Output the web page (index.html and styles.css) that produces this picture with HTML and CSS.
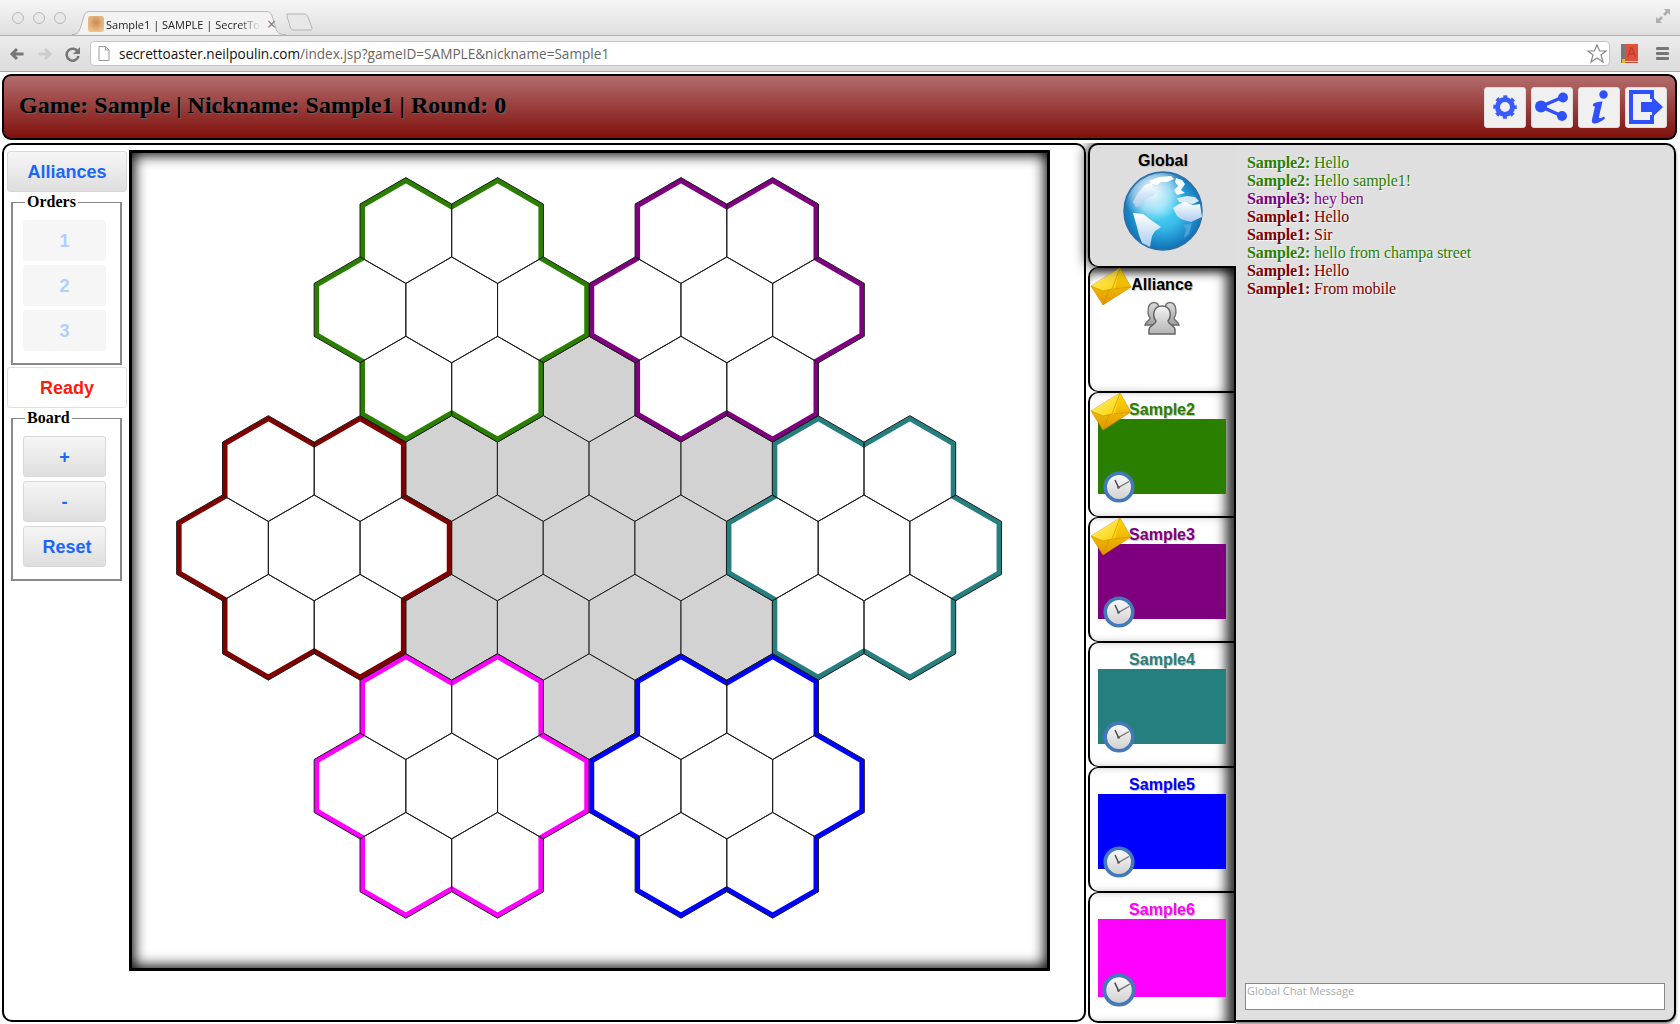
FILE: index.html
```html
<!DOCTYPE html>
<html>
    <head>
        <meta charset="utf-8">
        <title>Sample1 | SAMPLE | SecretToaster</title>
        <link rel="stylesheet" href="styles.css">
    </head>
    <body>
        <svg class="defs" width="0" height="0">
            <defs>
                <!-- globe -->
                <radialGradient id="globe-sea" cx="50%" cy="48%" r="58%">
                    <stop offset="0" stop-color="#52d4f6"/>
                    <stop offset=".4" stop-color="#38bcea"/>
                    <stop offset=".75" stop-color="#1a86c6"/>
                    <stop offset="1" stop-color="#0f5f9e"/>
                </radialGradient>
                <radialGradient id="globe-shine" cx="36%" cy="24%" r="40%">
                    <stop offset="0" stop-color="#fff" stop-opacity=".95"/>
                    <stop offset=".6" stop-color="#fff" stop-opacity=".5"/>
                    <stop offset="1" stop-color="#fff" stop-opacity="0"/>
                </radialGradient>
                <linearGradient id="land" x1="0" y1="0" x2="0" y2="1">
                    <stop offset="0" stop-color="#fff"/>
                    <stop offset="1" stop-color="#a9cdee"/>
                </linearGradient>
                <!-- envelope -->
                <linearGradient id="env-body" x1="0" y1="0" x2="0" y2="1">
                    <stop offset="0" stop-color="#ffdc00"/>
                    <stop offset="1" stop-color="#e29400"/>
                </linearGradient>
                <linearGradient id="env-flap" x1="0" y1="0" x2="1" y2="1">
                    <stop offset="0" stop-color="#fff480"/>
                    <stop offset="1" stop-color="#fbcf00"/>
                </linearGradient>
                <symbol id="envelope" viewBox="0 0 44 42">
                    <polygon points="3,22 32,4 43,23 15,41" fill="url(#env-body)" stroke="#c98f00" stroke-width=".6"/>
                    <polygon points="3,22 32,4 27,24 15,27" fill="url(#env-flap)"/>
                    <polyline points="3,22 15,27 24,25 32,4" fill="none" stroke="#cf9a00" stroke-width=".8"/>
                    <path d="M15 41L21 26M26 25L43 23" fill="none" stroke="#c98f00" stroke-width=".6"/>
                </symbol>
                <!-- clock -->
                <linearGradient id="clock-face" x1="0" y1="0" x2="0" y2="1">
                    <stop offset="0" stop-color="#fbfbfb"/>
                    <stop offset="1" stop-color="#cfcfcf"/>
                </linearGradient>
                <symbol id="clock" viewBox="0 0 32 32">
                    <circle cx="16" cy="16" r="13.8" fill="url(#clock-face)" stroke="#4379b8" stroke-width="3.6"/>
                    <line x1="15.5" y1="16.5" x2="12" y2="9" stroke="#444" stroke-width="1.4"/>
                    <line x1="15.5" y1="16.5" x2="26" y2="10.5" stroke="#777" stroke-width="1.4"/>
                    <circle cx="15.5" cy="16.5" r="1.3" fill="#555"/>
                </symbol>
                <!-- hexes -->
                <polygon id="hex" points="0,-52.9 45.85,-26.45 45.85,26.45 0,52.9 -45.85,26.45 -45.85,-26.45"/>
                <g id="cells">
                    <use href="#hex" x="-45.85" y="-79.35"/>
                    <use href="#hex" x="45.85" y="-79.35"/>
                    <use href="#hex" x="-91.7"/>
                    <use href="#hex"/>
                    <use href="#hex" x="91.7"/>
                    <use href="#hex" x="-45.85" y="79.35"/>
                    <use href="#hex" x="45.85" y="79.35"/>
                </g>
                <path id="edge" d="M-45.85 -132.25L0 -105.8L45.85 -132.25L91.7 -105.8L91.7 -52.9L137.55 -26.45L137.55 26.45L91.7 52.9L91.7 105.8L45.85 132.25L0 105.8L-45.85 132.25L-91.7 105.8L-91.7 52.9L-137.55 26.45L-137.55 -26.45L-91.7 -52.9L-91.7 -105.8Z"/>
                <clipPath id="edge-clip"><use href="#edge"/></clipPath>
                <g id="territory" clip-path="url(#edge-clip)"><use href="#edge" fill="none" stroke-width="10"/></g>
            </defs>
        </svg>

        <div class="chrome">
            <div class="tabbar">
                <span class="light"></span><span class="light"></span><span class="light"></span>
                <div class="tab">
                    <svg class="tab-shape" width="214" height="24" viewBox="0 0 214 30" preserveAspectRatio="none">
                        <path d="M0 29.5C6 29.5 7 26 9 19L12 6C13 2 15 .5 19 .5H193C197 .5 199 2 200 6L204 22C205 27 207 29.5 214 29.5" fill="#f3f3f3" stroke="#b0b0b0"/>
                    </svg>
                    <span class="favicon"></span>
                    <span class="tab-title">Sample1 | SAMPLE | SecretTo</span>
                    <span class="tab-close">×</span>
                </div>
                <svg class="new-tab" width="28" height="18" viewBox="0 0 28 18">
                    <path d="M1 1H18C20 1 21 2 22 4L26 15C26.500 16 26 17 24 17H7C6 17 5 16 4.500 15L1 3Z" fill="#e8e8e8" stroke="#b4b4b4"/>
                </svg>
                <svg class="fullscreen" width="16" height="16" viewBox="0 0 16 16">
                    <path d="M9 1H15V7L13 5L10 8L8 6L11 3ZM1 9V15H7L5 13L8 10L6 8L3 11Z" fill="#b0b0b0"/>
                </svg>
            </div>
            <div class="toolbar">
                <svg class="nav-icon" width="16" height="16" viewBox="0 0 16 16">
                    <path d="M14.500 8H4M8 3L3 8L8 13" fill="none" stroke="#777" stroke-width="3"/>
                </svg>
                <svg class="nav-icon" width="16" height="16" viewBox="0 0 16 16">
                    <path d="M1.500 8H12M8 3L13 8L8 13" fill="none" stroke="#cdcdcd" stroke-width="3"/>
                </svg>
                <svg class="nav-icon" width="16" height="16" viewBox="0 0 16 16">
                    <path d="M13 6A6 6 0 1 0 13.500 10" fill="none" stroke="#777" stroke-width="2.600"/>
                    <path d="M15 1V8H8Z" fill="#777"/>
                </svg>
                <div class="address">
                    <svg width="12" height="15" viewBox="0 0 12 15">
                        <path d="M1 .5H7.500L11 4V14.500H1ZM7.500 .5V4H11" fill="#fff" stroke="#999"/>
                    </svg>
                    <span class="url"><b>secrettoaster.neilpoulin.com</b>/index.jsp?gameID=SAMPLE&amp;nickname=Sample1</span>
                    <svg class="star" width="20" height="19" viewBox="0 0 20 19">
                        <path d="M10 1L12.700 7H19L14 11L16 18L10 14L4 18L6 11L1 7H7.300Z" fill="#fff" stroke="#888" stroke-width="1.200"/>
                    </svg>
                </div>
                <svg class="book" width="17" height="19" viewBox="0 0 17 19">
                    <rect x="0" y="0" width="4" height="19" fill="#777"/>
                    <rect x="4" y="0" width="13" height="17" fill="#e0503c"/>
                    <rect x="4" y="17" width="13" height="1" fill="#d0d0d0"/>
                    <rect x="4" y="18" width="13" height="1" fill="#c0503c"/>
                    <rect x="1" y="15" width="3" height="4" fill="#e8b830"/>
                    <path d="M6.500 13L10 4H11L14.500 13M8 10H13" fill="none" stroke="#b8402c" stroke-width="1.400"/>
                </svg>
                <div class="menu-icon"><span></span><span></span><span></span></div>
            </div>
        </div>

        <div class="topbar">
            <h1 class="game-title">Game: Sample | Nickname: Sample1 | Round: 0</h1>
            <div class="top-buttons">
                <button class="top-btn">
                    <svg width="26" height="26" viewBox="0 0 26 26">
                        <circle cx="13" cy="13" r="7.500" fill="none" stroke="#3a5cff" stroke-width="5"/>
                        <circle cx="13" cy="13" r="10" fill="none" stroke="#3a5cff" stroke-width="3.500" stroke-dasharray="3.850 4" stroke-dashoffset="1.900"/>
                    </svg>
                </button>
                <button class="top-btn">
                    <svg width="36" height="30" viewBox="0 0 36 30">
                        <path d="M29 5L7 14.500L28 24" fill="none" stroke="#2f50ff" stroke-width="3.500"/>
                        <circle cx="29" cy="5.500" r="5" fill="#2f50ff"/>
                        <circle cx="7" cy="14.500" r="6" fill="#2f50ff"/>
                        <circle cx="28" cy="24" r="5" fill="#2f50ff"/>
                    </svg>
                </button>
                <button class="top-btn">
                    <svg class="info-icon" width="26" height="34" viewBox="0 0 26 34">
                        <circle cx="15.500" cy="4.500" r="4.200" fill="#2f50ff"/>
                        <path d="M5 14C7 12.500 10 11.500 14.500 11.500L11 26.500C10.700 28.500 12 29 16 26.500L17 28.500C13 32 9 33.500 6.500 33.500C4 33.500 3.500 31.500 4 29.500L7 16.500C6 16 5.500 16 5 16.500Z" fill="#2f50ff"/>
                    </svg>
                </button>
                <button class="top-btn">
                    <svg width="36" height="34" viewBox="0 0 36 34">
                        <path d="M24 9V2H3V32H24V25" fill="none" stroke="#2f50ff" stroke-width="4"/>
                        <path d="M13 12H24V6.500L35 17L24 27.500V22H13Z" fill="#2f50ff"/>
                    </svg>
                </button>
            </div>
        </div>

        <div class="main">
            <div class="game">
                <div class="controls">
                    <button class="btn btn-wide">Alliances</button>
                    <fieldset class="group">
                        <legend>Orders</legend>
                        <button class="btn btn-off">1</button>
                        <button class="btn btn-off">2</button>
                        <button class="btn btn-off">3</button>
                    </fieldset>
                    <button class="btn btn-wide btn-ready">Ready</button>
                    <fieldset class="group">
                        <legend>Board</legend>
                        <button class="btn">+</button>
                        <button class="btn">-</button>
                        <button class="btn btn-reset">Reset</button>
                    </fieldset>
                </div>
                <div class="board">
                    <svg class="hexmap" viewBox="132 153 915 815" width="915" height="815">
                        <g transform="translate(589.1 547.9)" class="grey-cells">
                            <use href="#hex" y="-158.7"/>
                            <use href="#hex" x="-137.55" y="-79.35"/>
                            <use href="#hex" x="137.55" y="-79.35"/>
                            <use href="#hex" x="-137.55" y="79.35"/>
                            <use href="#hex" x="137.55" y="79.35"/>
                            <use href="#hex" y="158.7"/>
                            <use href="#cells"/>
                        </g>
                        <use href="#territory" class="t-green" x="451.7" y="309.85"/>
                        <use href="#territory" class="t-purple" x="726.8" y="309.85"/>
                        <use href="#territory" class="t-maroon" x="314.2" y="547.9"/>
                        <use href="#territory" class="t-teal" x="864" y="547.9"/>
                        <use href="#territory" class="t-magenta" x="451.7" y="785.95"/>
                        <use href="#territory" class="t-blue" x="726.8" y="785.95"/>
                        <g class="cell-lines">
                            <use href="#cells" x="451.7" y="309.85"/>
                            <use href="#cells" x="726.8" y="309.85"/>
                            <use href="#cells" x="314.2" y="547.9"/>
                            <use href="#cells" x="864" y="547.9"/>
                            <use href="#cells" x="451.7" y="785.95"/>
                            <use href="#cells" x="726.8" y="785.95"/>
                        </g>
                    </svg>
                </div>
            </div>

            <div class="players">
                <div class="player player-global">
                    <div class="player-name">Global</div>
                    <svg class="globe" width="80" height="80" viewBox="0 0 80 80">
                        <circle cx="40" cy="40" r="39" fill="url(#globe-sea)" stroke="#2f6ea6" stroke-width="1.500"/>
                        <circle cx="40" cy="40" r="38" fill="url(#globe-shine)"/>
                        <path d="M22 14L28 12L30 15L26 18L34 20L30 25L22 28L19 34L13 36L10 31L15 22Z" fill="url(#land)"/>
                        <path d="M26 10L36 6L48 5L51 8L44 11L38 11L34 14L29 13Z" fill="#fff"/>
                        <path d="M53 7L59 9L62 13L58 19L62 22L54 24L51 19L55 15L52 11Z" fill="#f4f9fe"/>
                        <path d="M54 27L64 25L72 26L76 30L70 33L60 32L56 31Z" fill="#d8eaf8"/>
                        <path d="M52 41L50 37L56 33L62 31L70 34L77 33L79 46L68 51L64 50L58 48L54 45Z" fill="url(#land)"/>
                        <path d="M69 52L66 63L61 67L63 58L60 54Z" fill="#4aa4d8"/>
                        <path d="M10 42L20 43L28 49L38 56L32 60L29 65L27 76L19 72L16 64L14 56Z" fill="url(#land)"/>
                    </svg>
                </div>
                <div class="player player-alliance">
                    <svg class="envelope"><use href="#envelope"/></svg>
                    <div class="player-name">Alliance</div>
                    <svg class="people" width="36" height="34" viewBox="0 0 36 34">
                        <defs>
                            <linearGradient id="person" x1="0" y1="0" x2="0" y2="1">
                                <stop offset="0" stop-color="#dcdcdc"/>
                                <stop offset="1" stop-color="#9c9c9c"/>
                            </linearGradient>
                            <linearGradient id="person-front" x1="0" y1="0" x2="0" y2="1">
                                <stop offset="0" stop-color="#f4f4f4"/>
                                <stop offset="1" stop-color="#b4b4b4"/>
                            </linearGradient>
                        </defs>
                        <path d="M1 25C1 20 6 20 6 17C3 13 3 1.500 10 1.500C14 1.500 15 5 15 8V24H1Z" fill="url(#person)" stroke="#6e6e6e" stroke-width="1.300"/>
                        <path d="M35 25C35 20 30 20 30 17C33 13 33 1.500 26 1.500C22 1.500 21 5 21 8V24H35Z" fill="url(#person)" stroke="#6e6e6e" stroke-width="1.300"/>
                        <path d="M5 33V29C5 24 12 24 12 20C8 15 9 5 18 5C27 5 28 15 24 20C24 24 31 24 31 29V33Z" fill="url(#person-front)" stroke="#666" stroke-width="1.500"/>
                    </svg>
                </div>
                <div class="player">
                    <svg class="envelope"><use href="#envelope"/></svg>
                    <div class="player-name c-green">Sample2</div>
                    <div class="player-color b-green"><svg class="clock"><use href="#clock"/></svg></div>
                </div>
                <div class="player">
                    <svg class="envelope"><use href="#envelope"/></svg>
                    <div class="player-name c-purple">Sample3</div>
                    <div class="player-color b-purple"><svg class="clock"><use href="#clock"/></svg></div>
                </div>
                <div class="player">
                    <div class="player-name c-teal">Sample4</div>
                    <div class="player-color b-teal"><svg class="clock"><use href="#clock"/></svg></div>
                </div>
                <div class="player">
                    <div class="player-name c-blue">Sample5</div>
                    <div class="player-color b-blue"><svg class="clock"><use href="#clock"/></svg></div>
                </div>
                <div class="player player-last">
                    <div class="player-name c-magenta">Sample6</div>
                    <div class="player-color b-magenta"><svg class="clock"><use href="#clock"/></svg></div>
                </div>
            </div>

            <div class="chat">
                <div class="messages">
                    <div class="c-green"><b>Sample2:</b> Hello</div>
                    <div class="c-green"><b>Sample2:</b> Hello sample1!</div>
                    <div class="c-purple"><b>Sample3:</b> hey ben</div>
                    <div class="c-maroon"><b>Sample1:</b> Hello</div>
                    <div class="c-maroon"><b>Sample1:</b> Sir</div>
                    <div class="c-green"><b>Sample2:</b> hello from champa street</div>
                    <div class="c-maroon"><b>Sample1:</b> Hello</div>
                    <div class="c-maroon"><b>Sample1:</b> From mobile</div>
                </div>
                <textarea class="chat-input" placeholder="Global Chat Message"></textarea>
            </div>
        </div>
    </body>
</html>
```

FILE: styles.css
```css
*{
    box-sizing: border-box;
}
html, body{
    margin: 0;
    height: 1024px;
    overflow: hidden;
    background-color: #fff;
}
.defs{
    position: absolute;
}

/* browser chrome */
.chrome{
    height: 72px;
    font-family: "Open Sans", sans-serif;
}
.tabbar{
    height: 36px;
    display: flex;
    align-items: center;
    padding-left: 12px;
    background: linear-gradient(#f6f6f6, #dfdfdf);
    border-bottom: 1px solid #b0b0b0;
}
.light{
    width: 12px;
    height: 12px;
    margin-right: 9px;
    border: 1px solid #b8b8b8;
    border-radius: 50%;
    background: #e8e8e8;
}
.tab{
    position: relative;
    width: 214px;
    height: 24px;
    margin: 11px 0 0 -3px;
    padding: 2px 0 0 16px;
    display: flex;
    align-items: center;
    font-size: 11px;
    color: #222;
}
.tab-shape{
    position: absolute;
    left: 0;
    top: 0;
}
.favicon{
    position: relative;
    width: 16px;
    height: 16px;
    margin-right: 2px;
    background: radial-gradient(circle at 50% 40%, #c98a56, #f0c68c 80%);
    border-radius: 2px;
}
.tab-title{
    position: relative;
    width: 155px;
    white-space: nowrap;
    -webkit-mask-image: linear-gradient(to right, #000 85%, transparent);
}
.tab-close{
    position: relative;
    margin-left: 6px;
    font-size: 16px;
    color: #777;
}
.new-tab{
    margin: 8px 0 0 0;
}
.fullscreen{
    margin: -4px 9px 0 auto;
}
.toolbar{
    height: 36px;
    display: flex;
    align-items: center;
    padding: 0 11px 0 9px;
    background: linear-gradient(#ececec, #dcdcdc);
    border-bottom: 1px solid #a8a8a8;
}
.nav-icon{
    margin-right: 12px;
}
.address{
    width: 1520px;
    height: 25px;
    margin-left: -3px;
    display: flex;
    align-items: center;
    padding: 0 2px 0 7px;
    background-color: #fff;
    border: 1px solid #c4c4c4;
    border-radius: 4px;
}
.url{
    margin-left: 9px;
    font-size: 13.6px;
    color: #666;
    white-space: nowrap;
}
.url b{
    font-weight: 400;
    color: #111;
}
.star{
    margin-left: auto;
}
.book{
    margin-left: 11px;
}
.menu-icon{
    margin-left: auto;
    width: 13px;
    display: flex;
    flex-direction: column;
    gap: 2px;
}
.menu-icon span{
    height: 3px;
    background-color: #777;
    border-radius: 1px;
}

/* top bar */
.topbar{
    height: 66px;
    margin: 2px 3px 3px 2px;
    padding-right: 8px;
    display: flex;
    align-items: center;
    justify-content: space-between;
    background: linear-gradient(#b36c6c, #7f100c);
    border: 2px solid #000;
    border-radius: 9px;
}
.game-title{
    margin: 0 0 4px 15px;
    font-family: "Liberation Serif", serif;
    font-size: 24px;
    font-weight: 700;
    color: #000;
    text-shadow: 1px 1px 1px #666;
}
.top-buttons{
    display: flex;
    gap: 5px;
}
.top-btn{
    width: 42px;
    height: 41px;
    padding: 0;
    display: flex;
    align-items: center;
    justify-content: center;
    background-color: #f0f0f0;
    border: 1px solid #ddd;
    border-radius: 3px;
}
.info-icon{
    margin-left: 3px;
}

/* main area */
.main{
    height: 880px;
    display: flex;
    margin-left: 2px;
}
.game{
    width: 1084px;
    height: 879px;
    display: flex;
    border: 2px solid #000;
    border-radius: 10px;
    background-color: #fff;
}
.controls{
    width: 125px;
    padding: 6px 0 0 3px;
}
.btn{
    display: block;
    width: 83px;
    height: 41px;
    margin: 0 0 4px;
    padding: 2px 0 0;
    font-family: "Liberation Sans", sans-serif;
    font-size: 18px;
    font-weight: 700;
    color: #1a66ff;
    background: linear-gradient(#f6f6f6, #dedede);
    border: 1px solid #d8d8d8;
    border-radius: 3px;
}
.btn-wide{
    width: 120px;
    margin: 0;
}
.btn-off{
    color: #afcfff;
    background: #f6f6f6;
    border-color: #f4f4f4;
}
.btn-ready{
    margin-bottom: 1px;
    color: #ff1a0a;
    background: #fff;
    border-color: #e0e0e0;
}
.btn-reset{
    padding-left: 5px;
}
.group{
    width: 111px;
    margin: 1px 0 2px 4px;
    padding: 0 0 8px 10px;
    border: 2px solid #888;
    border-top-width: 1px;
}
.group legend{
    margin: 3px 0 9px 2px;
    padding: 0 2px;
    font-family: "Liberation Serif", serif;
    font-size: 16px;
    line-height: 18px;
    font-weight: 700;
}
.board{
    width: 921px;
    height: 821px;
    margin-top: 5px;
    border: 3px solid #000;
    background-color: #fff;
    box-shadow: inset 0 0 14px 2px #000;
}
.hexmap{
    display: block;
}
.grey-cells{
    fill: #d2d2d2;
}
.cell-lines{
    fill: none;
}
#hex{
    stroke: #1c1c1c;
    stroke-width: 1;
}
.t-green{ stroke: #2a7f00; }
.t-purple{ stroke: #7f007f; }
.t-maroon{ stroke: #7f0000; }
.t-teal{ stroke: #267f7f; }
.t-magenta{ stroke: #ff00ff; }
.t-blue{ stroke: #0000ff; }

.c-green{ color: #2a7f00; }
.c-purple{ color: #7f007f; }
.c-maroon{ color: #7f0000; }
.c-teal{ color: #267f7f; }
.c-magenta{ color: #ff00ff; }
.c-blue{ color: #0000ff; }
.b-green{ background-color: #2a7f00; }
.b-purple{ background-color: #7f007f; }
.b-teal{ background-color: #267f7f; }
.b-magenta{ background-color: #ff00ff; }
.b-blue{ background-color: #0000ff; }

/* player tabs */
.players{
    width: 148px;
    margin-left: 2px;
    flex-shrink: 0;
}
.player{
    position: relative;
    height: 125px;
    padding: 8px 8px 0 8px;
    background-color: #fff;
    border: 2px solid #000;
    border-bottom-width: 1px;
    border-top-width: 1px;
    border-radius: 10px 0 0 10px;
    text-align: center;
    box-shadow: inset -14px 0 12px -6px rgba(0, 0, 0, .8);
}
.player-global{
    z-index: 3;
    height: 124px;
    padding-top: 7px;
    background-color: #dedede;
    border-top-width: 2px;
    border-right: 0;
    box-shadow: 0 0 14px 1px rgba(0, 0, 0, .85);
    clip-path: inset(0 0 -24px -24px);
}
.player-alliance{
    box-shadow: inset -14px 0 12px -6px rgba(0, 0, 0, .8), inset 0 10px 10px -6px rgba(0, 0, 0, .6);
}
.player-last{
    height: 131px;
    border-bottom-width: 2px;
}
.player-name{
    height: 18px;
    font-family: "Liberation Sans", sans-serif;
    font-size: 16px;
    line-height: 18px;
    font-weight: 700;
    text-shadow: 1px 1px 1px #bbb;
}
.player-color{
    position: relative;
    width: 128px;
    height: 75px;
}
.player-last .player-color{
    height: 78px;
}
.player-last .clock{
    left: 4px;
    bottom: -10px;
    width: 34px;
    height: 34px;
}
.globe{
    display: block;
    margin: 1px auto 0;
}
.people{
    margin-top: 7px;
}
.envelope{
    position: absolute;
    z-index: 1;
    left: -2px;
    top: -4px;
    width: 44px;
    height: 42px;
}
.clock{
    position: absolute;
    left: 5px;
    bottom: -9px;
    width: 32px;
    height: 32px;
}

/* chat */
.chat{
    flex: 1;
    height: 879px;
    margin-right: 4px;
    padding: 9px 9px 10px 11px;
    display: flex;
    flex-direction: column;
    background-color: #dfdfdf;
    border: 2px solid #000;
    border-left: 0;
    border-radius: 0 10px 10px 0;
    box-shadow: 0 2px 3px rgba(0, 0, 0, .5);
}
.messages{
    flex: 1;
    font-family: "Liberation Serif", serif;
    font-size: 16px;
    line-height: 18px;
    letter-spacing: -.1px;
    text-shadow: 1px 1px 1px #fff;
}
.chat-input{
    width: calc(100% + 2px);
    height: 27px;
    margin-left: -2px;
    padding: 0 1px;
    font-family: "Open Sans", sans-serif;
    font-size: 11px;
    line-height: 14px;
    background-color: #fff;
    border: 1px solid #888;
    border-radius: 0;
    resize: none;
}
.chat-input::placeholder{
    color: #aaa;
}
```
